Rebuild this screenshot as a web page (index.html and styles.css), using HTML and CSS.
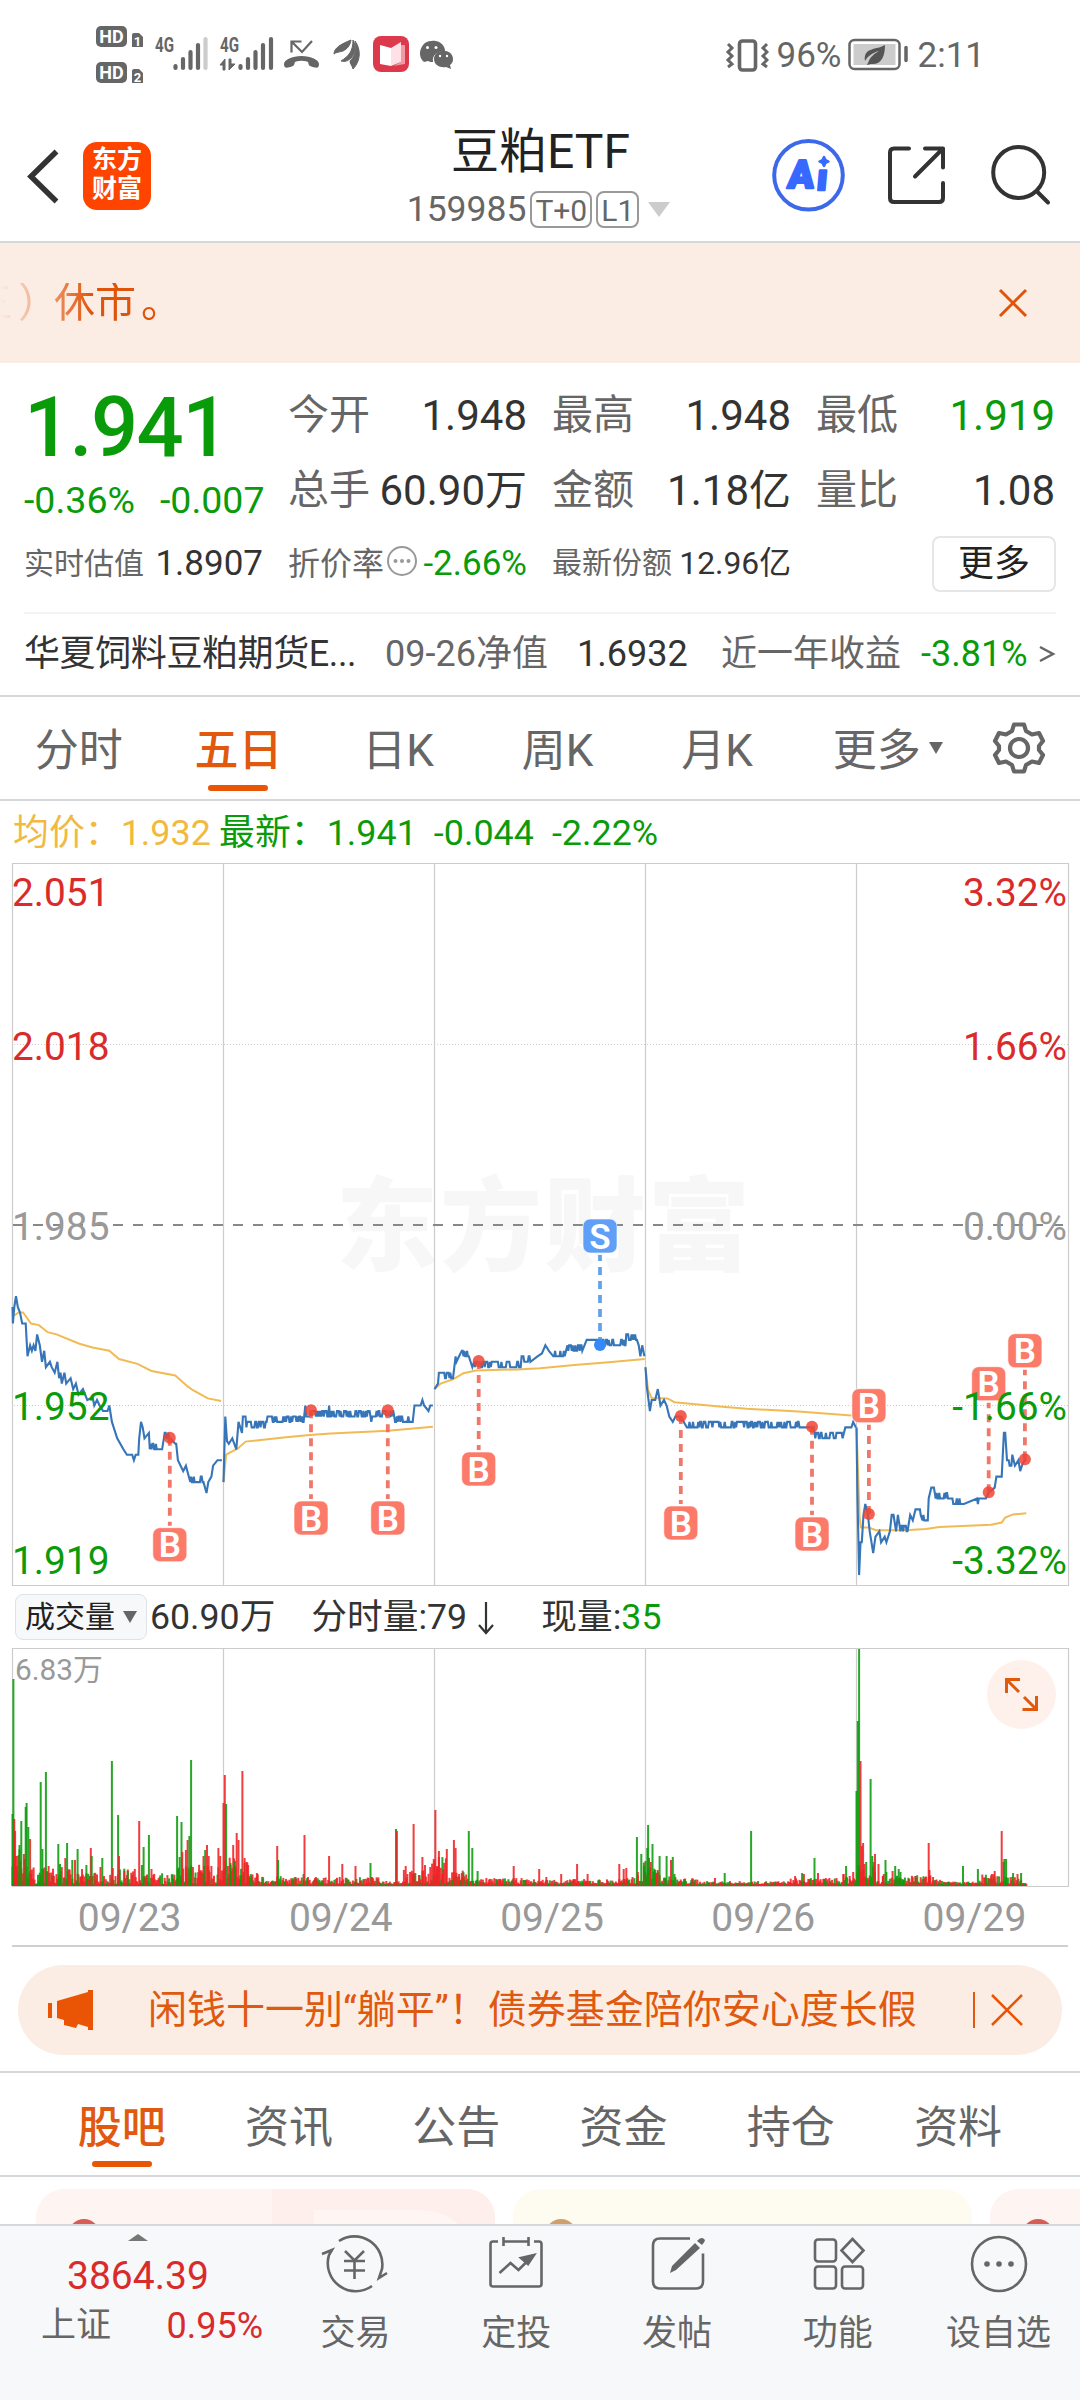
FILE: index.html
```html
<!DOCTYPE html>
<html lang="zh-CN">
<head>
    <meta charset="UTF-8">
    <meta name="viewport" content="width=device-width, initial-scale=1.0">
    <title>豆粕ETF 159985</title>
    <link rel="stylesheet" href="styles.css">
</head>
<body>
<div class="phone">

    <!-- status bar -->
    <div class="status">
        <svg class="status-left" viewBox="90 0 370 110" width="370" height="110">
            <g fill="#666">
                <rect x="96" y="26" width="31" height="21" rx="5"/>
                <rect x="96" y="62" width="31" height="21" rx="5"/>
                <path d="M132 35q0-2 2-2h5l4 4v10h-11zM132 71q0-2 2-2h5l4 4v10h-11z"/>
            </g>
            <g fill="#fff" font-weight="700" text-anchor="middle">
                <text x="111.5" y="43" font-size="18">HD</text>
                <text x="111.5" y="79" font-size="18">HD</text>
                <text x="137.5" y="45.500" font-size="13">1</text>
                <text x="137.500" y="81.500" font-size="13">2</text>
            </g>
            <g fill="#666" font-weight="700" font-size="20">
                <text x="155" y="52" textLength="19" lengthAdjust="spacingAndGlyphs">4G</text>
                <text x="220" y="52" textLength="19" lengthAdjust="spacingAndGlyphs">4G</text>
            </g>
            <g stroke="#666" stroke-width="4.200" stroke-linecap="round" fill="none">
                <path d="M175.500 66v2M183 59v9M190.500 52v16M198 45v23"/>
                <path d="M205.500 39v29" stroke="#ccc"/>
                <path d="M240.500 66v2M248 59v9M255.500 52v16M263 45v23M271 39v29"/>
            </g>
            <path d="M225 70V59l-5 6h3v5zM229 59v11l6-6h-4v-5z" fill="#666" stroke="#666" stroke-width="1"/>
            <path d="M301.500 41.500h-10v11M292 42l10 10 10-11" fill="none" stroke="#666" stroke-width="2.200"/>
            <path d="M284 64c0-4 8-8 17.500-8s17.500 4 17.500 8c0 5-3 4-9 2-2-1-1-4-3-4.500-4-1-7-1-11 0-2 .5-1 3.500-3 4.500-6 2-9 3-9-2z" fill="#666"/>
            <path d="M334 54c0-6 7-10 17-14-1 6-4 9-8 11-3 1-7 1-9 3zM341 61c8-5 12-10 12-21 4 8 2 14-2 18-3 3-6 4-10 3zM353 69c-1-4-3-5-3-8 5-5 7-11 5-20 6 8 6 20-2 28z" fill="#666" stroke="#666" stroke-width="1"/>
            <rect x="373" y="36" width="36" height="36" rx="8" fill="#dc3a4c"/>
            <path d="M380 45l11 3v18l-11-2z" fill="#fff"/>
            <path d="M391 48l10-6v20l-10 4z" fill="#ffe0e6"/>
            <path d="M401 45h4v19l-12 2 8-4z" fill="#f29aa5"/>
            <path d="M424 62c-6-5-5-14 1-19 6-4 16-3 19 4 1 2 1 3 1 4-8 0-13 4-12 11-2 0-3 0-5-1z" fill="#666"/>
            <path d="M434 59c0-11 19-11 19 0 0 3-1 4-3 6l1 4-5-2c-6 1-12-2-12-8z" fill="#666"/>
            <g fill="#fff"><circle cx="427.500" cy="47.500" r="1.500"/><circle cx="436" cy="47.500" r="1.500"/><circle cx="440" cy="56" r="1.200"/><circle cx="447" cy="56" r="1.200"/></g>
        </svg>
        <div class="status-right">
            <svg viewBox="726 35 44 38" width="44" height="38" fill="none" stroke="#666">
                <rect x="740.500" y="40" width="16" height="29" rx="3" stroke-width="3.600"/>
                <path d="M729 43l4 4-4 4 4 4-4 4 4 4-4 3M768 43l-4 4 4 4-4 4 4 4-4 4 4 3" stroke-width="3"/>
            </svg>
            <span class="battery-text">96%</span>
            <svg class="battery" viewBox="847 38 62 34" width="62" height="34">
                <rect x="849.500" y="40" width="50" height="29" rx="5" fill="none" stroke="#666" stroke-width="2.500"/>
                <rect x="853.500" y="44" width="42" height="21" fill="#ccc"/>
                <path d="M906 47.500v13" stroke="#666" stroke-width="3.500" stroke-linecap="round"/>
                <path d="M885 45c0 12-4 20-14 19l-4 1c0-1 1-2 1-2 2-6 6-9 11-12-7 2-11 5-14 10-2-14 12-11 20-16z" fill="#555"/>
            </svg>
            <span>2:11</span>
        </div>
    </div>

    <!-- title bar -->
    <header class="header">
        <div class="header-side">
            <svg class="back" viewBox="26 146 34 58" width="34" height="58"><path d="M56.500 150.500L31 175.500l25.500 25" fill="none" stroke="#333" stroke-width="5.500"/></svg>
            <div class="logo"><span>东方</span><span>财富</span></div>
        </div>
        <div class="title">
            <h1>豆粕ETF</h1>
            <div class="code"><span>159985</span><b>T+0</b><b>L1</b><i></i></div>
        </div>
        <svg class="actions" viewBox="770 138 285 76" width="285" height="76" fill="none" stroke="#333" stroke-width="4" stroke-linecap="round" stroke-linejoin="round">
            <circle cx="808.500" cy="175.300" r="34.300" stroke="#3d68ea"/>
            <g fill="#3769ff" stroke="#3769ff" stroke-width="2.500" font-weight="900">
                <text transform="translate(787 188) skewX(-5)" font-size="39" textLength="26" lengthAdjust="spacingAndGlyphs">A</text>
                <text transform="translate(816 190) skewX(-5)" font-size="37">ı</text>
                <path d="M824 157l1.500 3 3 1.500-3 1.500-1.500 3-1.500-3-3-1.500 3-1.500z"/>
            </g>
            <path d="M909 148.500h-15q-4 0-4 4v45.500q0 4 4 4h45q4 0 4-4v-15M925 148.500h18v19M943 148.500l-28 28"/>
            <circle cx="1018.700" cy="172.500" r="25.500"/>
            <path d="M1037.500 192l10.500 10.500"/>
        </svg>
    </header>

    <div class="notice">
        <div class="notice-text">三<span>）</span>休市<span>。</span></div>
        <svg viewBox="0 0 30 30" width="30" height="30"><path d="M2 2l26 26M28 2L2 28" stroke="#e0530a" stroke-width="3"/></svg>
    </div>

    <!-- quote -->
    <section class="quote">
        <div class="quote-top">
            <div class="price">
                <strong>1.941</strong>
                <div><span>-0.36%</span><span>-0.007</span></div>
            </div>
            <dl class="stats">
                <div><dt>今开</dt><dd>1.948</dd></div>
                <div><dt>最高</dt><dd>1.948</dd></div>
                <div><dt>最低</dt><dd class="down">1.919</dd></div>
                <div><dt>总手</dt><dd>60.90万</dd></div>
                <div><dt>金额</dt><dd>1.18亿</dd></div>
                <div><dt>量比</dt><dd>1.08</dd></div>
            </dl>
        </div>
        <div class="quote-sub">
            <div class="sub-a"><span>实时估值</span><em>1.8907</em></div>
            <div class="sub-b"><span>折价率</span>
                <svg viewBox="0 0 32 32" width="32" height="32"><circle cx="16" cy="16" r="14" fill="none" stroke="#999" stroke-width="2"/><g fill="#999"><circle cx="9.500" cy="16" r="2"/><circle cx="16" cy="16" r="2"/><circle cx="22.500" cy="16" r="2"/></g></svg>
                <em class="down">-2.66%</em></div>
            <div class="sub-c"><span>最新份额</span><em>12.96亿</em></div>
            <button class="more">更多</button>
        </div>
        <div class="fund">
            <span class="fund-name">华夏饲料豆粕期货E...</span>
            <span class="fund-date">09-26净值</span>
            <span class="fund-value">1.6932</span>
            <span class="fund-year">近一年收益</span>
            <span class="fund-pct down">-3.81%</span>
            <svg viewBox="0 0 18 18" width="18" height="18"><path d="M2 2l13 7-13 7" fill="none" stroke="#666" stroke-width="2.500"/></svg>
        </div>
    </section>

    <nav class="periods">
        <a>分时</a><a class="active">五日</a><a>日K</a><a>周K</a><a>月K</a><a class="has-arrow">更多<i></i></a>
        <svg viewBox="-28 -28 56 56" width="56" height="56" fill="none" stroke="#666" stroke-width="4.200" stroke-linejoin="round">
            <circle r="9"/>
            <path d="M-5-23.500H5L7-17l6 3.500 7-1.500 4 8-4 5v4l4 5-4 8-7-1.500L7 17l-2 6.500H-5L-7 17l-6-3.500-7 1.500-4-8 4-5v-4l-4-5 4-8 7 1.500 6-3.500z"/>
        </svg>
    </nav>

    <div class="legend">
        <span class="avg">均价：1.932</span>
        <span>最新：1.941</span><span class="diff">-0.044</span><span class="pct">-2.22%</span>
    </div>

    <svg class="chart" id="chart" viewBox="0 863 1080 723" width="1080" height="723">
        <text class="watermark" x="336" y="1263" textLength="414">东方财富</text>
        <g class="frame">
            <path d="M12.500 863.500H1068.500V1585.500H12.500zM223.500 863V1585M434.500 863V1585M645.500 863V1585M856.500 863V1585"/>
            <path class="dots" d="M14 1044.500H1068M14 1405.500H1068"/>
        </g>
        <path class="zero" d="M13 1225H1066"/>
        <path id="avgLine"/>
        <path id="priceLine"/>
        <g id="marks"></g>
        <g class="axis">
            <text class="up" x="12" y="906">2.051</text>
            <text class="up" x="12" y="1060">2.018</text>
            <text class="flat" x="12" y="1240">1.985</text>
            <text class="down" x="12" y="1419.500">1.952</text>
            <text class="down" x="12" y="1573.500">1.919</text>
        </g>
        <g class="axis right">
            <text class="up" x="1067" y="906">3.32%</text>
            <text class="up" x="1067" y="1060">1.66%</text>
            <text class="flat" x="1067" y="1240">0.00%</text>
            <text class="down" x="1067" y="1419.500">-1.66%</text>
            <text class="down" x="1067" y="1573.500">-3.32%</text>
        </g>
    </svg>

    <div class="vol-legend">
        <span class="vol-select">成交量<i></i></span>
        <span>60.90万</span>
        <span class="vol-minute">分时量:79<svg viewBox="0 0 18 34" width="18" height="34"><path d="M9 1v31M2 24l7 8 7-8" fill="none" stroke="#333" stroke-width="2.200"/></svg></span>
        <span class="vol-now">现量:<em>35</em></span>
    </div>

    <svg class="volume" viewBox="0 1648 1080 240" width="1080" height="240">
        <g class="frame"><path d="M12.500 1648.500H1068.500V1886.500H12.500zM223.500 1649V1886M434.500 1649V1886M645.500 1649V1886M856.500 1649V1886"/></g>
        <g id="bars"></g>
        <text class="vol-max" x="15" y="1680">6.83万</text>
        <circle cx="1021.500" cy="1694.500" r="34.500" fill="#fef1eb"/>
        <path d="M1006.500 1693v-13.500h13.500M1007 1680l12 12M1024 1697l12 12M1036.500 1696v13.500h-14" fill="none" stroke="#e0590f" stroke-width="3"/>
    </svg>
    <div class="dates"><span>09/23</span><span>09/24</span><span>09/25</span><span>09/26</span><span>09/29</span></div>

    <div class="banner">
        <svg viewBox="0 0 46 40" width="46" height="40" fill="#e95504"><path d="M0 13h4v15H0zM9 11L40 2V0h5v40h-5v-3l-10-3-2 4-12-3v-5l-7-2z"/></svg>
        <span>闲钱十一别“躺平”！债券基金陪你安心度长假</span>
        <svg class="banner-close" viewBox="0 0 32 32" width="32" height="32"><path d="M1 1l30 30M31 1L1 31" stroke="#e95504" stroke-width="2.500"/></svg>
    </div>

    <nav class="tabs">
        <a class="active">股吧</a><a>资讯</a><a>公告</a><a>资金</a><a>持仓</a><a>资料</a>
    </nav>

    <div class="feed">
        <div class="card card-red"></div>
        <div class="card card-gold"></div>
        <div class="card card-red"></div>
    </div>

    <!-- bottom bar -->
    <footer class="bottom">
        <div class="index">
            <i></i>
            <strong>3864.39</strong>
            <div><span>上证</span><em>0.95%</em></div>
        </div>
        <a>
            <svg viewBox="322 2233 68 62" width="68" height="62">
                <path d="M340 2241a28 28 0 0 1 43 28l-3 9 8-5M373 2286a28 28 0 0 1-43-31l3-5-10 4"/>
                <path d="M346 2251l9.500 9.500 9.500-9.500M345 2261h21M345 2270.500h21M355.500 2261v18"/>
            </svg>交易</a>
        <a>
            <svg viewBox="482 2233 68 62" width="68" height="62">
                <path d="M498 2241.500h-5q-2.500 0-2.500 2.500v40q0 2.500 2.500 2.500h46q2.500 0 2.500-2.500v-40q0-2.500-2.500-2.500h-5M503.500 2237v9M528.500 2237v9M504 2241.500h24"/>
                <path d="M499.500 2273l11-10 8 7 10-10"/><path d="M521 2258l13-3-6 9z" fill="#666"/>
            </svg>定投</a>
        <a>
            <svg viewBox="642 2233 68 62" width="68" height="62">
                <path d="M689 2238.500h-30q-7 0-7 7v36q0 7 7 7h36q7 0 7-7v-28"/>
                <path d="M694 2243l5 5-24 22-6 3 2-7zM697 2240q4-4 7 0 0 2-3 5l-5-4z" fill="#666" stroke="none"/>
            </svg>发帖</a>
        <a>
            <svg viewBox="803 2233 68 62" width="68" height="62">
                <rect x="814" y="2239.500" width="21" height="22" rx="3"/><rect x="814" y="2266.500" width="21" height="22" rx="3"/><rect x="841" y="2266.500" width="21" height="22" rx="3"/>
                <path d="M851.500 2239l11 11.500-11 11.500-11-11.500z"/>
            </svg>功能</a>
        <a>
            <svg viewBox="965 2233 68 62" width="68" height="62">
                <circle cx="999" cy="2264" r="27"/>
                <g fill="#666" stroke="none"><circle cx="987" cy="2264" r="2.800"/><circle cx="999" cy="2264" r="2.800"/><circle cx="1011" cy="2264" r="2.800"/></g>
            </svg>设自选</a>
    </footer>
</div>
<script src="chart.js"></script>
</body>
</html>
```

FILE: styles.css
```css
* {
    box-sizing: border-box;
    margin: 0;
    padding: 0;
}
body {
    background: #fff;
    color: #333;
    font-family: Roboto, "Noto Sans CJK SC", sans-serif;
    line-height: 1;
}
i, em {
    font-style: normal;
}
svg {
    flex: none;
}
.phone {
    width: 1080px;
    height: 2400px;
    display: flex;
    flex-direction: column;
    overflow: hidden;
}
.phone > * {
    flex: none;
}
.down {
    color: #0a9b0a;
}

/* status bar */
.status {
    height: 110px;
    display: flex;
    justify-content: space-between;
    padding-left: 90px;
}
.status-right {
    height: 110px;
    display: flex;
    align-items: center;
    font-size: 35px;
    color: #666;
    padding-right: 95px;
}
.battery-text {
    margin: 0 5px 0 8px;
}
.battery {
    margin-right: 9px;
}

/* header */
.header {
    height: 133px;
    border-bottom: 2px solid #d5d7da;
    display: flex;
    justify-content: space-between;
    padding: 0 25px 0 26px;
}
.header-side {
    width: 285px;
    display: flex;
    align-items: center;
    gap: 23px;
}
.logo {
    width: 68px;
    height: 68px;
    border-radius: 14px;
    background: #ff4400;
    color: #fff;
    font-size: 25px;
    font-weight: 700;
    display: flex;
    flex-direction: column;
    align-items: center;
    justify-content: center;
    gap: 4px;
    padding-bottom: 3px;
}
.title {
    display: flex;
    flex-direction: column;
    align-items: center;
    padding-top: 18px;
}
.title h1 {
    font-size: 48px;
    font-weight: 400;
    line-height: 48px;
    color: #222;
}
.code {
    display: flex;
    align-items: center;
    height: 37px;
    margin-top: 15px;
    margin-right: 4px;
    font-size: 35.5px;
    color: #666;
}
.code b {
    height: 37px;
    line-height: 35px;
    border: 2px solid #999;
    border-radius: 8px;
    padding: 0 3px;
    font-size: 30px;
    font-weight: 400;
    margin-left: 4px;
}
.code i {
    margin-left: 9px;
    border: 11px solid transparent;
    border-top: 15px solid #ccc;
    border-bottom: 0;
}
.actions {
    margin-top: 28px;
}

.notice {
    height: 120px;
    background: #fcede4;
    display: flex;
    align-items: center;
    justify-content: space-between;
    padding-right: 52px;
    overflow: hidden;
}
.notice-text {
    font-size: 41px;
    margin-left: -28px;
    color: #e0530a;
    -webkit-mask-image: linear-gradient(90deg, transparent 28px, #000 120px);
    mask-image: linear-gradient(90deg, transparent 28px, #000 120px);
}
.notice-text span {
    position: relative;
    left: 5px;
}

/* quote */
.quote {
    height: 334px;
    border-bottom: 2px solid #d5d7da;
    padding: 0 24px;
}
.quote-top {
    height: 168px;
    display: flex;
    justify-content: space-between;
}
.price {
    color: #0a9b0a;
}
.price strong {
    display: block;
    font-size: 83px;
    font-weight: 500;
    line-height: 84px;
    padding: 23px 0 0;
    letter-spacing: -1.6px;
}
.price div {
    display: flex;
    gap: 25px;
    margin-top: 12px;
    font-size: 37.5px;
}
.stats {
    display: grid;
    grid-template-columns: repeat(3, 239px);
    grid-auto-rows: 75px;
    column-gap: 25px;
    padding-top: 15px;
    margin-right: 1px;
}
.stats div {
    display: flex;
    align-items: center;
    justify-content: space-between;
    font-size: 42px;
    white-space: nowrap;
}
.stats dt {
    font-size: 41px;
    color: #666;
}
.quote-sub {
    height: 83px;
    display: flex;
    align-items: center;
    border-bottom: 2px solid #f3f3f3;
    padding-bottom: 16px;
    white-space: nowrap;
}
.quote-sub > div {
    display: flex;
    align-items: center;
    justify-content: space-between;
}
.quote-sub span {
    font-size: 30px;
    color: #666;
}
.quote-sub svg {
    margin: 0 2px 5px -2px;
}
.quote-sub em {
    font-size: 35px;
}
.quote-sub .sub-a {
    width: 239px;
}
.quote-sub .sub-b {
    width: 239px;
    margin-left: 25px;
}
.quote-sub .sub-b span {
    font-size: 32px;
}
.quote-sub .sub-c {
    width: 239px;
    margin-left: 25px;
}
.quote-sub .sub-c em {
    font-size: 31.8px;
}
.more {
    width: 124px;
    height: 56px;
    margin-left: auto;
    border: 2px solid #e6e6e6;
    border-radius: 8px;
    background: #fff;
    color: #222;
    font: 36px/50px Roboto, "Noto Sans CJK SC", sans-serif;
}
.fund {
    display: flex;
    align-items: center;
    height: 80px;
    font-size: 36px;
    white-space: nowrap;
}
.fund-name {
    letter-spacing: -.4px;
    width: 361px;
}
.fund-date {
    color: #666;
    width: 192px;
}
.fund-value {
    width: 144px;
}
.fund-year {
    color: #666;
    width: 200px;
}
.fund-pct {
    width: 117px;
}

/* period tabs */
.periods {
    height: 104px;
    display: flex;
    align-items: center;
    border-bottom: 2px solid #d5d7da;
    font-size: 44px;
    color: #666;
}
.periods a {
    width: 159.6px;
    height: 102px;
    line-height: 108px;
    text-align: center;
    position: relative;
    left: -1px;
}
.periods svg {
    margin-left: 33px;
}
.periods i {
    position: absolute;
    left: 132px;
    top: 45px;
    border: 7.5px solid transparent;
    border-top: 12px solid #666;
    border-bottom: 0;
}
.active {
    color: #e0590f;
    font-weight: 500;
    position: relative;
}
.active::after {
    content: "";
    position: absolute;
    left: 50%;
    bottom: 8px;
    width: 60px;
    height: 6px;
    margin-left: -30px;
    border-radius: 3px;
    background: #e95504;
}

.legend {
    height: 62px;
    display: flex;
    align-items: center;
    padding: 4px 0 0 13px;
    font-size: 35.9px;
    color: #0a9b0a;
}
.legend .avg {
    color: #f2b93f;
    width: 206px;
}
.legend .diff {
    margin-left: 17px;
}
.legend .pct {
    margin-left: 18px;
}

/* price chart */
.chart, .volume {
    display: block;
}
.frame {
    fill: none;
    stroke: #ccc;
    stroke-width: 1.2;
}
.dots {
    stroke-dasharray: 1 2;
}
.zero {
    stroke: #888;
    stroke-width: 2;
    stroke-dasharray: 10 10;
}
.watermark {
    font: 900 102px "Noto Sans CJK SC", sans-serif;
    fill: #f7f7f7;
}
#avgLine {
    fill: none;
    stroke: #f0bb52;
    stroke-width: 2;
}
#priceLine {
    fill: none;
    stroke: #3675b8;
    stroke-width: 2.1;
}
.axis {
    font-size: 38.8px;
}
.right {
    text-anchor: end;
}
.axis .up { fill: #d92b2b; }
.axis .flat { fill: #999; }
.axis .down { fill: #0a9b0a; }
.mark line {
    stroke-width: 3.8;
    stroke-dasharray: 8 6;
    opacity: .9;
}
.mark rect {
    stroke: #fff;
    stroke-opacity: .6;
}
.mark text {
    fill: #fff;
    font-size: 35px;
    font-weight: 600;
    text-anchor: middle;
}
.buy line { stroke: #ee6a5a; }
.buy rect { fill: #fc7a6a; }
.buy circle { fill: #ee4434; fill-opacity: .85; }
.sell line { stroke: #559ae4; }
.sell rect { fill: #609ff8; }
.sell circle { fill: #3489fb; }

/* volume */
.vol-legend {
    height: 62px;
    display: flex;
    align-items: center;
    padding: 2px 0 0 15px;
    font-size: 35.7px;
    white-space: nowrap;
}
.vol-select {
    display: flex;
    align-items: center;
    justify-content: space-between;
    width: 132px;
    height: 46px;
    padding: 0 9px 0 9px;
    margin: 0 3px 2px 0;
    border: 1px solid #dfe2e6;
    border-radius: 8px;
    background: #f7f8fa;
    color: #222;
    font-size: 30px;
}
.vol-select i {
    border: 7.5px solid transparent;
    border-top: 12px solid #666;
    border-bottom: 0;
}
.vol-minute {
    display: flex;
    align-items: center;
    width: 230px;
    margin-left: 36px;
}
.vol-minute svg {
    margin-left: 10px;
}
.vol-now em {
    color: #0a9b0a;
}
.vol-max {
    font-size: 29.8px;
    fill: #999;
}
.dates {
    display: flex;
    justify-content: space-between;
    height: 59px;
    margin: 0 12px;
    border-bottom: 2px solid #d0d0d0;
    font-size: 39px;
    color: #999;
}
.dates span {
    flex: 1;
    text-align: center;
    padding: 11px 0 0 24px;
}

.banner {
    height: 90px;
    margin: 18px 18px 16px;
    padding: 0 39px 0 30px;
    border-radius: 45px;
    background: #fcede4;
    color: #e0590f;
    display: flex;
    align-items: center;
    font-size: 39px;
    white-space: nowrap;
}
.banner span {
    margin-left: 54px;
    flex: 1;
}
.banner-close {
    width: 50px;
    padding-left: 16px;
    border-left: 2px solid #e0590f;
    height: 36px;
}

/* lower tabs */
.tabs {
    height: 106px;
    display: flex;
    padding-left: 38px;
    border-top: 2px solid #d5d7da;
    border-bottom: 2px solid #d5d7da;
    font-size: 44px;
    color: #666;
}
.tabs a {
    width: 167.3px;
    line-height: 110px;
    height: 102px;
    text-align: center;
}
.feed {
    display: flex;
    gap: 18px;
    height: 47px;
    padding: 12px 0 0 36px;
    overflow: hidden;
}
.card {
    flex: none;
    width: 459px;
    height: 120px;
    border-radius: 28px;
    position: relative;
}
.card::before {
    content: "";
    position: absolute;
    left: 32px;
    top: 30px;
    width: 32px;
    height: 32px;
    border-radius: 50%;
    background: #d95b55;
}
.card-red {
    background: linear-gradient(90deg, #fef5f3 236px, #feefed 236px);
}
.card-red::after {
    content: "";
    position: absolute;
    left: 278px;
    top: 21px;
    width: 166px;
    height: 60px;
    border-radius: 2px 90px 0 0;
    background: #fff5f3;
}
.card-gold {
    background: #fefcf0;
}
.card-gold::before {
    background: #d0a06c;
}

/* bottom bar */
.bottom {
    height: 176px;
    display: flex;
    border-top: 2px solid #d5d7da;
    background: #f7f8fa;
    font-size: 35px;
    color: #666;
}
.index {
    width: 275px;
    padding: 8px 12px 0 41px;
    display: flex;
    flex-direction: column;
}
.index i {
    margin-left: 87px;
    width: 0;
    border: 10.5px solid transparent;
    border-bottom: 7px solid #777;
    border-top: 0;
}
.index strong {
    font-size: 39px;
    font-weight: 400;
    color: #d92b2b;
    margin: 16px 0 0 26px;
}
.index div {
    display: flex;
    justify-content: space-between;
    margin-top: 12px;
}
.index em {
    color: #d92b2b;
    font-size: 36px;
}
.bottom a {
    width: 160.8px;
    display: flex;
    flex-direction: column;
    align-items: center;
    padding-top: 7px;
    gap: 21px;
}
.bottom svg {
    fill: none;
    stroke: #666;
    stroke-width: 2.6;
}
```

FILE: chart.js
```js
// Each day is a list of [minute, price in 0.001, jitter]. With jitter set, the
// line ticks between that price and one tick higher from the previous point on.
var DAYS = [
    [[0,1970],[.5,1967],[2,1970],[4,1972],[6,1970],[8.5,1969],[11,1967],[15,1967],[17,1961],[20,1963],[22,1962],[24,1963],[26,1962],[28,1965],[31,1963],[33.5,1960],[36,1962],[38,1959],[42.5,1960],[44.5,1959],[48,1958],[51,1960],[53,1957],[54.5,1958],[56,1956],[59,1958],[61,1956],[66,1957],[69,1955],[72,1956],[75,1954],[80,1955],[85,1953],[91,1953.5],[93,1952],[96,1953],[99,1952],[103,1951],[108,1951],[110,1952],[113,1949],[119,1946],[126,1944],[130,1943],[136,1943],[138,1942],[140,1943],[143,1943],[144,1946],[146,1949],[148,1948],[150,1946],[155,1947],[156,1944],[170,1944,1],[172,1946],[179,1946,1],[185,1945],[186,1945],[188,1942],[191,1941],[194,1940],[197,1941],[202,1938],[217,1938,1],[220.5,1936],[222.5,1938],[226,1939],[228,1941],[233,1942],[238,1942]],
    [[0,1938],[2,1950],[4,1945.5],[6,1945],[10,1946],[14.5,1944],[17,1949],[21,1947],[22,1950],[25,1950],[26,1948],[47,1948,1],[91,1949,1],[93,1952],[94,1950],[119,1950,1],[120,1952],[167,1950,1],[168,1949],[194,1950,1],[195,1949],[215,1949,1],[217,1952],[224,1952],[226,1953],[228,1952],[233,1951],[235,1952],[238,1952]],
    [[0,1955],[4,1956],[5,1958],[19,1957,1],[21,1957],[24,1961],[25,1960],[28,1961],[31,1962],[38,1961,1],[39,1961],[43,1959],[45,1960],[46,1959],[98,1959,1],[109,1960,1],[117,1961],[122,1961.5],[126,1963],[130,1962],[135,1961],[148,1961,1],[151,1963],[168,1962,1],[173,1964],[186,1964],[217,1963,1],[218,1965],[230,1964,1],[232,1963],[234,1961],[236,1963],[238.5,1961]],
    [[0,1959],[1.5,1955.5],[5,1951],[7,1953],[11,1953],[14,1955],[17,1952],[21,1953],[24,1952],[27,1950],[31,1949],[34,1950],[40,1950],[47,1948],[178,1948,1],[180,1948],[191,1948],[193,1946],[224,1946,1],[227,1948],[234,1948],[236,1949],[239,1948]],
    [[0,1948],[1,1936],[3,1921],[4.5,1927],[6,1927],[8,1932],[10,1934],[13,1932],[15,1929],[17,1927],[19,1925],[21.5,1928],[26,1929],[28,1927],[32,1928],[34,1927],[38,1929],[40,1932],[42,1932],[45,1929],[47,1932],[50,1929],[58,1929,1],[61,1932],[64,1931],[67,1933],[73,1932,1],[75,1931],[81,1931,1],[82,1935],[85,1937],[88,1937],[90,1935],[104,1935,1],[108,1935],[122,1934,1],[137,1935],[138,1934],[139,1935],[147,1935],[150,1936],[157,1937],[159,1939],[165,1939],[167.5,1947],[169,1947],[171,1942],[176,1941,1],[177,1943],[180,1941],[184,1942],[186,1940],[188,1941],[191,1942],[193,1942]]
];
var AVERAGES = [
    [[2,1968.5],[7,1969],[12,1969],[21,1967],[30,1966.7],[40,1965.4],[50,1965],[76,1963.3],[91,1962.6],[110,1962],[121,1960.5],[142,1959.6],[158,1958.3],[185,1957.5],[199,1955.5],[205,1954.8],[222,1953.3],[237,1952.8]],
    [[0,1938],[3,1943],[6,1943.3],[16,1944.1],[25,1945.4],[71,1946.2],[98,1946.6],[122,1946.9],[187,1947.4],[238,1948.1]],
    [[0,1955],[7,1956],[21,1956.8],[33,1957.9],[47,1958.4],[94,1958.6],[120,1958.8],[159,1959.4],[198,1959.9],[239,1960.5]],
    [[0,1959],[3,1954.8],[7,1953.4],[25,1953.3],[33,1952.6],[84,1951.8],[115,1951.4],[174,1950.9],[234,1950.2]],
    [[0,1948],[3.5,1931.6],[5,1929.7],[14,1929.7],[22,1929.2],[55,1929.2],[79,1929.4],[94,1929.8],[153,1930.2],[165,1930.6],[169,1931.5],[178,1932.1],[193,1932.3]]
];
// type, x, label y, dot y
var MARKS = [
    ['B',169.8,1544.7,1437.7],['B',311,1518,1410.3],['B',387.8,1518,1410.3],['B',478.7,1469,1361],['S',600,1236,1345],
    ['B',680.8,1523,1416],['B',812,1534,1426.7],['B',868.9,1405.7,1514],['B',988.7,1383.7,1492.3],['B',1024.9,1350.7,1459.3]
];
// notable minutes: "minute height colour"
var SPIKES = [
    '0 72g,1 207g,2 67r,3 55r,5 30r,8 41g,10 65g,13 32r,15 79g,16 83g,18 59g,20 47r,32 104g,34 37g,38 114g,41 20r,52 42g,54 22g,60 28r,62 43g,68 26g,71 26r,74 37g,79 17r,84 21g,89 38r,90 30g,100 19r,102 28g,113 125g,114 18r,120 71g,121 30r,127 15r,131 15g,144 65r,147 21g,149 39g,155 51g,158 17r,187 70g,190 29g,192 64g,193 34r,197 36r,199 46r,201 50g,203 126g,217 30r,219 36g,221 41r,223 30r,226 20r,234 38r,236 30r',
    '0 83r,1.5 111r,3 82g,5 20r,8 23g,11 41r,13 25g,15 53r,17 46r,21.5 115r,24 28r,26 24r,28 21r,38 13r,61 40r,62 26g,91 12g,92 51r,105 9r,120 30r,135 22r,150 20r,167 23g,168 9r,196 57g,197 55r,205 16r,207 20r,216 62r,222 11r,226 29r,229 21r,235 19r,239 27r',
    '1 76r,3 20r,5 35r,9 12r,14 37r,22 46r,24 38r,28 12r,31 13r,39 55g,43 38g,49 15g,59 8r,75 7r,90 20r,103 6g,119 17r,127 9r,144 12r,158 7r,162 22r,174 12r,210 22r,215 17r,218 18r,225 9r,230 49g,231 14r,235 32g,238 20g',
    '0 25g,2 38g,3 61g,6 24r,8 42g,12 13r,14 16r,16 30g,24 30g,29 26r,31 29g,33 12g,44 7g,52 6g,79 8r,90 13g,120 55g,136 4r,170 10r,178 13g,180 12r,192 28g,196 13r,209 8r,217 8r,225 12r,228 20g,232 10r,236 14r',
    '0 95g,1.5 165g,3 237g,4.5 125r,6 40r,7.5 43r,9 22r,11 24g,16 107g,18 30g,20 24r,21 32r,25 22r,30 10r,33 26g,41 15r,44 20g,48 17g,50 14g,67 10r,82 43r,83 16r,87 9r,97 5g,121 20g,138 17g,146 8r,154 12r,157 15r,165 55r,167 24r,168 27g,170 27g,178 13g,183 12r,187 13g'
];
// background activity: [from minute, max height] per day
var ACTIVITY = [
    [[0,36],[22,17],[80,12],[95,11],[115,16],[140,11],[185,20],[205,22],[225,18]],
    [[0,28],[28,10],[45,8],[100,7],[180,4],[205,14],[235,28]],
    [[0,28],[15,16],[38,6],[100,5],[210,6],[225,9],[238,24]],
    [[0,32],[10,16],[18,8],[35,6],[60,3],[165,6],[225,10]],
    [[0,28],[24,12],[42,9],[85,5],[100,2.5],[140,10],[172,12],[188,1]]
];

function x(day, minute) {
    return 12.5 + day * 211 + minute * 0.88;
}
function y(price) {
    return 1225 + (1985 - price) * 5.47;
}
var seed = 7;
function random() {
    seed = (seed * 16807) % 2147483647;
    return seed / 2147483647;
}

function linePath(days) {
    var d = '';
    days.forEach(function (points, day) {
        points.forEach(function (p, i) {
            if (p[2]) {
                for (var m = points[i - 1][0] + 1; m < p[0]; m++) {
                    d += 'L' + x(day, m).toFixed(1) + ' ' + y(p[1] + (random() < .5 ? 1 : 0)).toFixed(1);
                }
            }
            d += (i ? 'L' : 'M') + x(day, p[0]).toFixed(1) + ' ' + y(p[1]).toFixed(1);
        });
    });
    return d;
}
document.getElementById('avgLine').setAttribute('d', linePath(AVERAGES));
document.getElementById('priceLine').setAttribute('d', linePath(DAYS));

document.getElementById('marks').innerHTML = MARKS.map(function (m) {
    var edge = m[2] + (m[3] > m[2] ? 19 : -19);
    return '<g class="mark ' + (m[0] === 'B' ? 'buy' : 'sell') + '">' +
        '<line x1="' + m[1] + '" x2="' + m[1] + '" y1="' + m[3] + '" y2="' + edge + '"/>' +
        '<circle cx="' + m[1] + '" cy="' + m[3] + '" r="6"/>' +
        '<rect x="' + (m[1] - 17) + '" y="' + (m[2] - 17) + '" width="34" height="34" rx="7"/>' +
        '<text x="' + m[1] + '" y="' + (m[2] + 12.5) + '">' + m[0] + '</text></g>';
}).join('');

var bars = '';
function bar(day, minute, height, color) {
    bars += '<rect x="' + (x(day, minute) - 1).toFixed(1) + '" y="' + (1886 - height).toFixed(1) +
        '" width="2" height="' + height.toFixed(1) + '" fill="' + (color === 'g' ? '#0a9b0a' : '#ee2226') + '" opacity=".88"/>';
}
SPIKES.forEach(function (list, day) {
    var last = day === 4 ? 194 : 240;
    for (var m = 0; m < last; m++) {
        var max = 0;
        ACTIVITY[day].forEach(function (a) {
            if (m >= a[0]) max = a[1];
        });
        var r = random();
        bar(day, m, 2 + max * Math.pow(r, 1.5), random() < .33 ? 'g' : 'r');
    }
    list.split(',').forEach(function (s) {
        var parts = s.split(' ');
        bar(day, +parts[0], parseFloat(parts[1]), parts[1].slice(-1));
    });
});
document.getElementById('bars').innerHTML = bars;
```
